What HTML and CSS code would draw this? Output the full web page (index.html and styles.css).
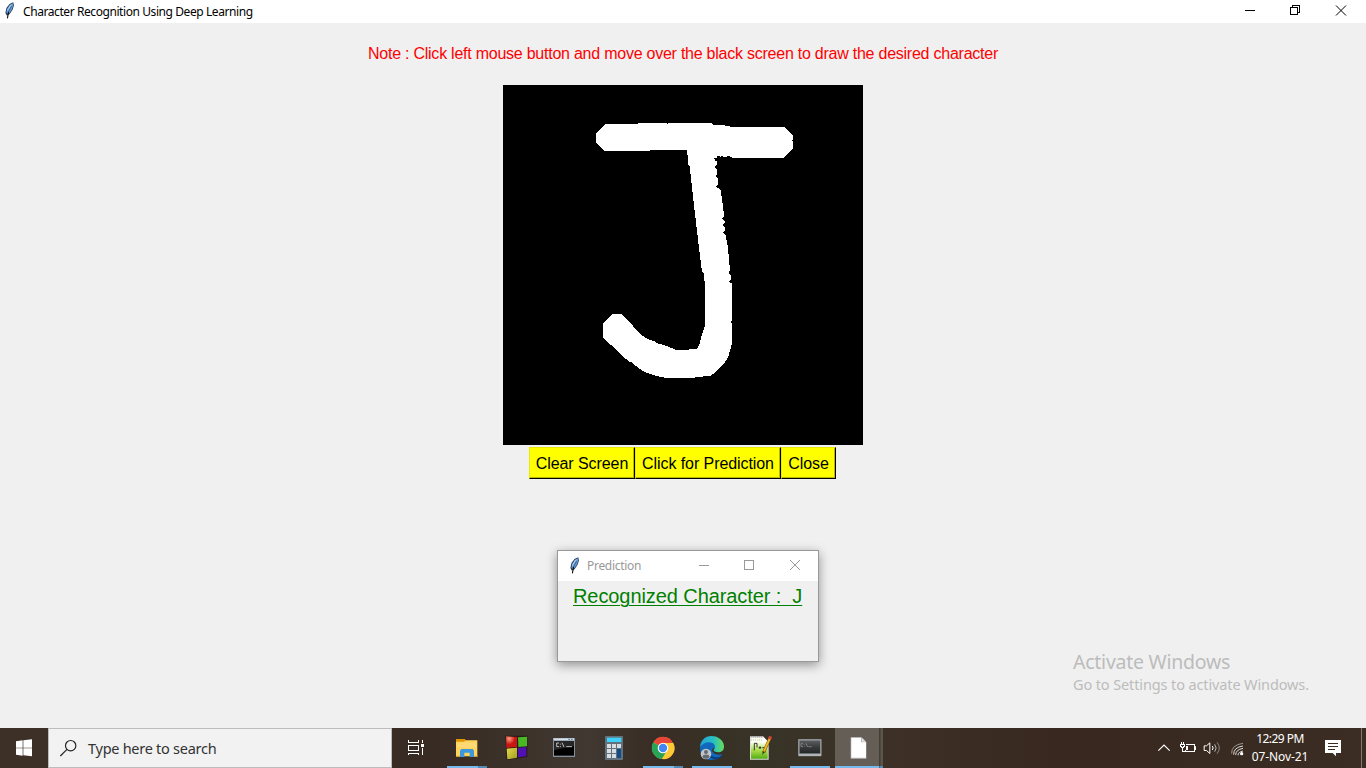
FILE: index.html
```html
<!DOCTYPE html>
<html lang="en">
<head>
<meta charset="utf-8">
<title>Character Recognition Using Deep Learning</title>
<link rel="stylesheet" href="styles.css">
</head>
<body>
<svg class="defs" width="0" height="0" aria-hidden="true">
  <symbol id="feather" viewBox="0 0 30 50">
    <path d="M26 1 L15 6 L6 18 L3 32 L7 40 L15 36 L24 23 L28 10 Z" fill="#263747"/>
    <path d="M25 4 L16 8 L8 20 L6 31 L9 36 L15 32 L22 22 L26 10 Z" fill="#609ad9"/>
    <path d="M23 6 L16 10 L9 22 L8 29 Z" fill="#a8cdf4"/>
    <path d="M21 12 L12 29" fill="none" stroke="#1b2f45" stroke-width="1.500"/>
    <path d="M12 29 L9 48" fill="none" stroke="#000" stroke-width="3"/>
  </symbol>
</svg>
<main class="desktop">
  <header class="titlebar">
    <svg class="feather"><use href="#feather"/></svg>
    <h1 class="title"><span>Character Recognition Using Deep Learning</span></h1>
    <div class="controls">
      <svg viewBox="0 0 46 23"><path class="crisp" d="M19 10.500h10"/></svg>
      <svg viewBox="0 0 46 23"><path class="crisp" d="M18.500 7.500h7v7h-7zM20.500 7v-1.500h7v7h-1.500"/></svg>
      <svg viewBox="0 0 46 23"><path d="M18 5.500l10 10M28 5.500l-10 10"/></svg>
    </div>
  </header>
  <section class="app">
    <p class="note"><span>Note : Click left mouse button and move over the black screen to draw the desired character</span></p>
    <svg class="canvas" viewBox="0 0 360 360">
      <g transform="translate(77 25) scale(.333333)">
        <path fill="#fff" shape-rendering="crispEdges" d="M76 42H174V39H261V42H264V39H396L399 44L426 45L450 49V51H614L639 76V90H636V93H639V117L612 144H456L453 140L444 138L438 142L427 139L420 140L417 136L412 139V145H402L405 151L411 154V165L403 172L411 180V192L406 199L414 206V222L408 230L420 237V241H423L424 258H427V276L429 282V303L432 306V318L426 325L435 333V339L428 346L436 353V362L429 369L438 377V390L442 394V405L445 410V432L448 440V462L450 468V482L445 490L454 498V507L447 514L456 521V633H453V638H456V700L445 739L435 757L393 798L345 801V804H258L231 798L198 788L180 777L159 762L153 756H147L142 748L135 745L69 682V640L97 612H126L153 641L180 672L204 688L219 692L237 702L252 705L267 711L288 720H327V717H351L360 700L363 682L375 648V534L372 490L366 485L357 414L345 312L333 204L329 168H326L321 120H210V123H73L48 98V70Z"/>
      </g>
    </svg>
    <div class="buttons">
      <button class="b1"><span>Clear Screen</span></button><button class="b2"><span>Click for Prediction</span></button><button class="b3"><span>Close</span></button>
    </div>
  </section>
  <section class="dialog">
    <header class="dialog-bar">
      <svg class="feather"><use href="#feather"/></svg>
      <h2><span>Prediction</span></h2>
      <div class="controls">
        <svg viewBox="0 0 46 30"><path class="crisp" d="M19 14.500h10"/></svg>
        <svg viewBox="0 0 46 30"><path class="crisp" d="M18.500 9.500h9v9h-9z"/></svg>
        <svg viewBox="0 0 46 30"><path d="M18 9l10 10M28 9l-10 10"/></svg>
      </div>
    </header>
    <p class="result"><span>Recognized Character :&nbsp; J</span></p>
  </section>
  <aside class="watermark">
    <p class="activate"><span>Activate Windows</span></p>
    <p class="settings"><span>Go to Settings to activate Windows.</span></p>
  </aside>
</main>
<footer class="taskbar">
  <svg class="start" viewBox="0 12 144 120"><path fill="#fff" d="M48 52l20-3v22H48zM70 49l26-3v25H70zM48 73h20v22l-20-3zM70 73h26v24l-26-3z"/></svg>
  <div class="search">
    <svg viewBox="174 42 60 60"><g fill="none" stroke="#222" stroke-width="3.500"><circle cx="212" cy="65" r="15.500"/><path d="M201 76l-20 20"/></g></svg>
    <span class="search-text">Type here to search</span>
  </div>
  <svg class="taskview" viewBox="21 12 150 120"><path class="crisp" d="M70.500 48v6h30v-6M70.500 63.500h30v15h-30zM70.500 93v-6h30v6M112.500 48v8M112.500 72v22" fill="none" stroke="#fff" stroke-width="3"/><path fill="#fff" d="M108 60h9v9h-9z"/></svg>
  <nav class="tasks">
    <svg viewBox="171 12 147 120">
      <path fill="#df9500" d="M213 45h27l3 6v9h-30z"/><path fill="#ffd35c" d="M213 53h24l5-4h35v48h-64z"/><path fill="#ffe28c" d="M216 56h58v15h-58z" opacity=".5"/>
      <path fill="#3c98dc" d="M225 80l4-5h34l4 5v19h-13V86h-16v13h-13z"/><path fill="#ecb83c" d="M213 95h12v3h-12zM267 95h11v3h-11z"/>
      <path class="line" d="M186 126h93v6h-93z"/><path class="line-dark" d="M279 126h27v6h-27z"/>
    </svg>
    <svg viewBox="318 12 147 120">
      <defs><radialGradient id="r" cx=".3" cy=".2"><stop stop-color="#ff9b82"/><stop offset="1" stop-color="#c81710"/></radialGradient><linearGradient id="y" x2="1" y2="1"><stop stop-color="#e2dc4c"/><stop offset="1" stop-color="#a49c1f"/></linearGradient></defs>
      <path fill="#261b1a" d="M361 35h66v64l-62 9z"/><path fill="url(#r)" d="M363 37l33 2v30l-32 3z"/><path fill="#48b925" d="M399 40l27-2v29l-26 2z"/><path fill="url(#y)" d="M365 74l31-3v30l-29 5z"/><path fill="#5010b5" d="M399 72l25-3v28l-25 3z"/>
    </svg>
    <svg viewBox="465 12 147 120">
      <path fill="#83909d" d="M504 42h66v57h-66z"/><path fill="#d7e0eb" d="M506 43h61v6h-61z"/><path fill="#000" d="M507 51h60v44h-60z"/><path fill="#555" opacity=".45" d="M507 51h60v15l-60 13z"/><path fill="#6584ab" d="M550 44h5v4h-5zM558 44h5v4h-5z"/>
      <g fill="none" stroke="#ddd" stroke-width="2.500"><path d="M522 57h-7v11h7M526 59v3M526 66v3M531 56l6 13M544 68h17"/></g>
    </svg>
    <svg viewBox="612 12 147 120">
      <rect x="660" y="36" width="54" height="72" rx="2" fill="#62717c"/><path fill="#3fd1fa" d="M666 41h43v13h-43z"/><g fill="#d7dde1"><path d="M666 60h12v12h-12zM681 60h12v12h-12zM696 60h12v12h-12zM666 75h12v12h-12zM681 75h12v12h-12zM666 90h12v12h-12zM681 90h12v12h-12z"/></g><path fill="#104c87" d="M696 75h12v27h-12z"/>
    </svg>
    <svg viewBox="-6 12 147 120">
      <circle cx="69" cy="72" r="33" fill="#fcc934"/><path fill="#e64538" d="M69 72L40 55A33 33 0 0 1 98 56z"/><path fill="#29a456" d="M40 55A33 33 0 0 0 66 105L80 82L69 72z"/><path fill="#fcc934" d="M69 57h31A33 33 0 0 1 66 105l16-26z"/><circle cx="69" cy="72" r="16" fill="#fff"/><circle cx="69" cy="72" r="12.500" fill="#4285f4"/>
      <path class="line" d="M9 126h93v6H9z"/><path class="line-dark" d="M102 126h27v6h-27z"/>
    </svg>
    <svg viewBox="141 12 147 120">
      <defs><linearGradient id="e"><stop stop-color="#22a4df"/><stop offset=".55" stop-color="#28bfc1"/><stop offset="1" stop-color="#65df5c"/></linearGradient></defs>
      <path fill="#1268bb" d="M180 74c2-19 25-28 41-19l9 13-14 8c0 12 14 19 31 15-8 12-20 17-32 17-21 0-35-14-35-34z"/><path fill="url(#e)" d="M180 70c1-20 15-34 34-34 22 0 38 15 38 32 0 16-17 20-29 14-4-2-2-4 1-9 4-9-4-18-17-18-12 0-22 6-27 15z"/><path fill="#073f86" d="M208 65c-8 12 0 32 17 34 12 2 19-3 23-7l-5 8c-15 10-39 4-43-14z"/>
      <circle cx="198" cy="90" r="16" fill="#c3c6c9"/><circle cx="198" cy="84" r="6" fill="#666b70"/><path fill="#666b70" d="M187 99c1-10 21-10 22 0-5 7-17 7-22 0z"/><path class="line" d="M156 126h120v6H156z"/>
    </svg>
    <svg viewBox="288 12 147 120">
      <defs><linearGradient id="g" x2="0" y2="1"><stop offset=".2" stop-color="#fafff0"/><stop offset=".6" stop-color="#a9dc48"/><stop offset="1" stop-color="#56ad16"/></linearGradient></defs>
      <path fill="#ddd" d="M330 37h39l17 17v53h-56z"/><path fill="url(#g)" d="M333 42h35l15 15v47h-50z"/><path fill="#fff" d="M369 38v15h15z"/><path stroke="#777" stroke-width="2" stroke-dasharray="2 4" d="M333 39h36M333 48h34"/>
      <path d="M343 79V58h8v12M356 71h8M360 67v8M367 71h8" fill="none" stroke="#151515" stroke-width="2.500"/><path d="M390 42l-19 43" stroke="#6b4a16" stroke-width="9"/><path d="M390 42l-18 40" stroke="#f2b629" stroke-width="6"/><path fill="#d34538" d="M388 35l8 4-3 8-9-4z"/><path fill="#222" d="M368 83l5 2-6 8z"/>
    </svg>
    <svg viewBox="435 12 147 120">
      <defs><linearGradient id="t" x2="0" y2="1"><stop stop-color="#5a5c5d"/><stop offset=".5" stop-color="#393b3c"/><stop offset="1" stop-color="#242728"/></linearGradient></defs>
      <rect x="474" y="45" width="71" height="52" rx="3" fill="#8c9194"/><path fill="#c4c7c8" d="M477 91h66v4h-66z"/><path fill="url(#t)" d="M479 50h61v38h-61z"/><g fill="none" stroke="#9c9fa0" stroke-width="2"><path d="M489 59h-6v9h6M493 60v2M493 66v2M498 58l5 11M505 68h10"/></g><path class="line" d="M450 126h120v6H450z"/>
    </svg>
    <svg viewBox="582 12 147 120">
      <path fill="#645e56" d="M585 12h133v120H585z"/><path fill="#433d36" d="M718 12h3v120h-3z"/><path fill="#5b544b" d="M721 12h8v120h-8z"/><path fill="#b9b9b9" d="M632 40h33l14 14v50h-47z"/><path fill="#fff" d="M634 41h29v14h15v46h-44z"/><path fill="#e0e0e0" d="M666 42l11 11h-11z"/><path class="line" d="M585 126h133v6H585z"/><path class="line-dark" d="M720 126h9v6h-9z"/>
    </svg>
  </nav>
  <div class="tray">
    <svg width="24" viewBox="36 12 72 120"><path d="M55 80l17-17 17 17" fill="none" stroke="#fff" stroke-width="3.500"/></svg>
    <svg width="24" viewBox="108 12 72 120"><g class="crisp" fill="none" stroke="#fff" stroke-width="3"><path d="M139 61.500h24v21h-27v-6"/><path d="M124.500 54v6M130.500 54v6M121 61.500h13v6h-3v4h-6v-4h-3zM127.500 72v10.500h9"/></g><path fill="#fff" d="M138 66h6v12h-6zM165 67h3v11h-3z"/></svg>
    <svg width="26" viewBox="180 12 78 120"><g fill="none" stroke="#fff" stroke-width="3"><path d="M192.500 65.500h7l10-9v32l-10-9h-7z"/><path d="M217 66q5 6 0 12"/><path d="M224 61q9 11 0 22" stroke="#bbb"/><path d="M231 55q14 17 0 34" stroke="#888"/></g></svg>
    <svg width="26" viewBox="258 12 78 120"><g fill="none" stroke="#fff" stroke-width="2.500"><path d="M275 89Q273 63 309 58" stroke="#aaa"/><path d="M281 92Q280 70 309 66M287 93Q287 77 309 73M294 94Q294 84 309 81"/></g><circle cx="305" cy="89" r="5" fill="#fff"/></svg>
    <div class="clock"><span class="time">12:29 PM</span><span class="date">07-Nov-21</span></div>
    <svg width="49" viewBox="516 12 147 120"><path fill="#fff" d="M555 48h48v39h-15v10l-10-10h-23z"/><path class="crisp" d="M564 58.500h30M564 67.500h30M564 76.500h21" stroke="#3c2d22" stroke-width="3"/></svg>
    <span class="show-desktop"></span>
  </div>
</footer>
</body>
</html>
```
FILE: styles.css
```css
* { box-sizing: border-box; }
body { margin: 0; width: 1366px; height: 768px; overflow: hidden; background: #f0f0f0; font-family: "Noto Sans", "Open Sans", sans-serif; }
h1, h2, p { margin: 0; font-weight: 400; white-space: nowrap; }
.defs { position: absolute; }
.desktop { height: 728px; position: relative; }
.titlebar { height: 23px; background: #fff; display: flex; align-items: center; padding: 0 2px 0 4px; }
.feather { width: 11px; height: 17px; flex: none; }
.titlebar .feather { margin-bottom: 2px; }
.title { font-size: 12px; line-height: 22px; margin-left: 8px; letter-spacing: -.42px; }
.controls { display: flex; margin-left: auto; }
.controls svg { width: 46px; height: 23px; fill: none; stroke: #000; stroke-width: 1; }
.crisp { shape-rendering: crispEdges; }
.app { height: 527px; padding-top: 20px; display: flex; flex-direction: column; align-items: center; font-family: "Liberation Sans", sans-serif; }
.note { color: #f00; font-size: 16px; line-height: 21px; height: 42px; letter-spacing: -.24px; }
.canvas { width: 360px; height: 360px; background: #000; flex: none; }
.buttons { display: flex; margin: 2px 1px 0 0; width: 307px; height: 32px; }
button { height: 32px; padding: 1px 0 0; margin: 0; background: #ff0; color: #000; border: 1px solid; border-color: #e8e800 #000 #000 #e8e800; font: 16px/29px "Liberation Sans", sans-serif; box-shadow: inset -1px -1px #b8b800; white-space: nowrap; letter-spacing: -.08px; }
.b1 { width: 106px; }
.b2 { width: 146px; }
.b3 { width: 55px; }
.dialog { position: absolute; left: 557px; top: 550px; width: 262px; height: 112px; border: 1px solid #999; background: #f0f0f0; box-shadow: 0 3px 10px #0006; }
.dialog-bar { height: 30px; background: #fff; display: flex; align-items: center; padding-left: 11px; color: #999; }
.dialog-bar .feather { margin-bottom: 2px; }
.dialog-bar h2 { font-size: 12px; line-height: 16px; margin-left: 7px; letter-spacing: -.3px; }
.dialog .controls svg { height: 30px; stroke: #999; }
.result { font: 20px/28px "Liberation Sans", sans-serif; color: #008000; padding: 1px 0 0 15px; letter-spacing: -.08px; }
.result span { text-decoration: underline; text-decoration-thickness: 1px; text-underline-offset: 2px; }
.watermark { position: absolute; left: 1073px; top: 649px; color: #bcbcbc; }
.activate { font-size: 19.500px; line-height: 26px; letter-spacing: -.25px; }
.settings { font-size: 14.500px; line-height: 19px; letter-spacing: -.12px; }
.taskbar { height: 40px; display: flex; background: linear-gradient(90deg, #3d3027, #382b23 32%, #403831 43%, #392d25 48%, #373426 56%, #3d3027 65%, #38281f 78%, #3b2d23); color: #fff; }
.taskbar svg { height: 40px; flex: none; display: block; }
.start { width: 48px; }
.search { width: 344px; background: #f2f2f2; border: 1px solid #bcbcbc; display: flex; align-items: center; padding-left: 9px; color: #333; }
.taskbar .search svg { width: 20px; height: 20px; }
.search-text { margin-left: 10px; font-size: 14.500px; white-space: nowrap; line-height: 38px; letter-spacing: -.27px; }
.taskview { width: 50px; }
.tasks { display: flex; }
.tasks svg { width: 49px; }
.line { fill: #76b9ed; }
.line-dark { fill: #538bb5; }
.tray { display: flex; margin-left: auto; }
.clock { width: 60px; height: 40px; padding: 2px 4px 0 0; display: flex; flex-direction: column; align-items: center; font-size: 12px; line-height: 18px; white-space: nowrap; }
.time { letter-spacing: -.55px; }
.date { letter-spacing: -.1px; }
.show-desktop { border-left: 1px solid #85796f; width: 5px; }
```
